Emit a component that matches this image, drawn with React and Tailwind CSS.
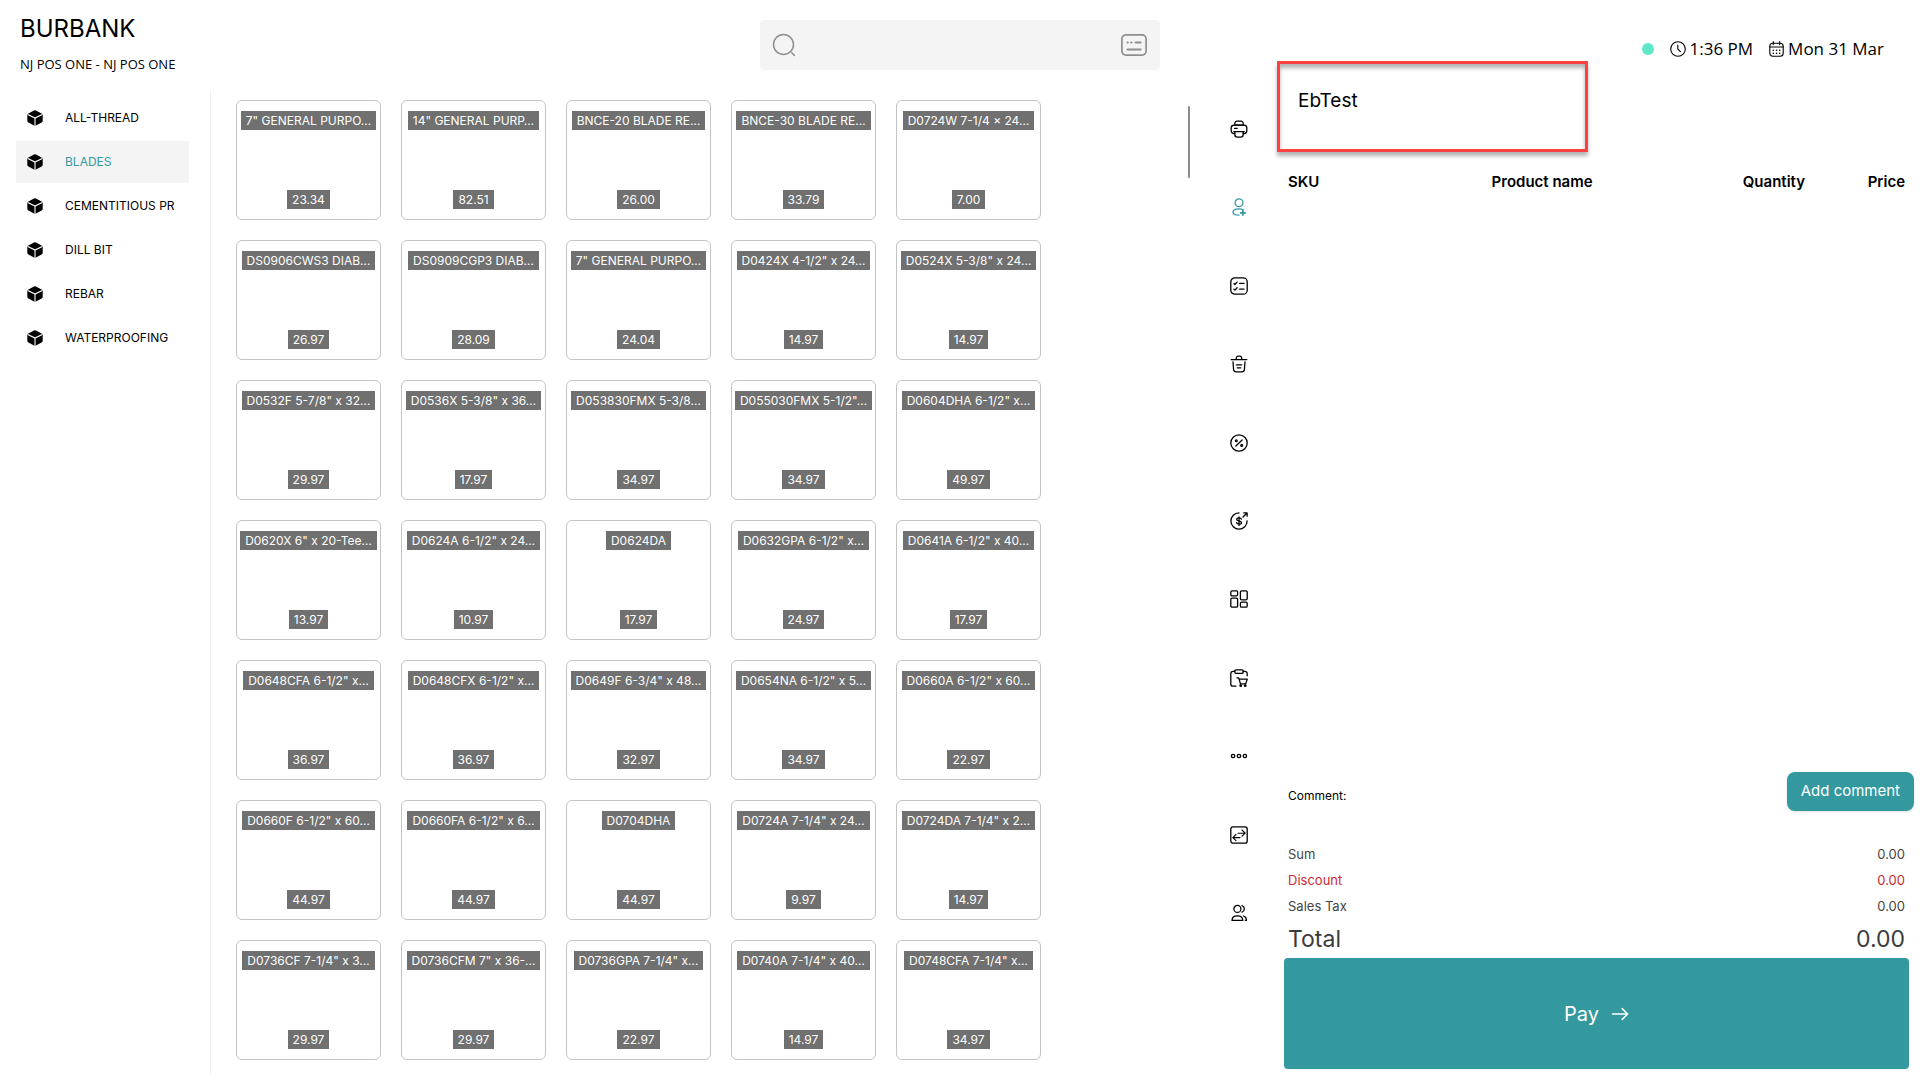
import React, { useState } from 'react';

const CATEGORIES = ['ALL-THREAD', 'BLADES', 'CEMENTITIOUS PR', 'DILL BIT', 'REBAR', 'WATERPROOFING'];

const PRODUCTS = [
    ['7" GENERAL PURPO…', '23.34'],
    ['14" GENERAL PURP…', '82.51'],
    ['BNCE-20 BLADE RE…', '26.00'],
    ['BNCE-30 BLADE RE…', '33.79'],
    ['D0724W 7-1/4 × 24…', '7.00'],
    ['DS0906CWS3 DIAB…', '26.97'],
    ['DS0909CGP3 DIAB…', '28.09'],
    ['7" GENERAL PURPO…', '24.04'],
    ['D0424X 4-1/2" x 24…', '14.97'],
    ['D0524X 5-3/8" x 24…', '14.97'],
    ['D0532F 5-7/8" x 32…', '29.97'],
    ['D0536X 5-3/8" x 36…', '17.97'],
    ['D053830FMX 5-3/8…', '34.97'],
    ['D055030FMX 5-1/2"…', '34.97'],
    ['D0604DHA 6-1/2" x…', '49.97'],
    ['D0620X 6" x 20-Tee…', '13.97'],
    ['D0624A 6-1/2" x 24…', '10.97'],
    ['D0624DA', '17.97'],
    ['D0632GPA 6-1/2" x…', '24.97'],
    ['D0641A 6-1/2" x 40…', '17.97'],
    ['D0648CFA 6-1/2" x…', '36.97'],
    ['D0648CFX 6-1/2" x…', '36.97'],
    ['D0649F 6-3/4" x 48…', '32.97'],
    ['D0654NA 6-1/2" x 5…', '34.97'],
    ['D0660A 6-1/2" x 60…', '22.97'],
    ['D0660F 6-1/2" x 60…', '44.97'],
    ['D0660FA 6-1/2" x 6…', '44.97'],
    ['D0704DHA', '44.97'],
    ['D0724A 7-1/4" x 24…', '9.97'],
    ['D0724DA 7-1/4" x 2…', '14.97'],
    ['D0736CF 7-1/4" x 3…', '29.97'],
    ['D0736CFM 7" x 36-…', '29.97'],
    ['D0736GPA 7-1/4" x…', '22.97'],
    ['D0740A 7-1/4" x 40…', '14.97'],
    ['D0748CFA 7-1/4" x…', '34.97'],
];

const TOOLS = [
    {
        label: 'Print',
        icon: (
            <>
                <path d="M4.8 5.2V3.4A2.2 2.2 0 0 1 7 1.2h4a2.2 2.2 0 0 1 2.2 2.2v1.8z" />
                <path d="M4.8 13.6H4A2.8 2.8 0 0 1 1.2 10.8V8A2.8 2.8 0 0 1 4 5.2h10A2.8 2.8 0 0 1 16.8 8v2.8a2.8 2.8 0 0 1-2.8 2.8h-.8" />
                <path d="M3.8 11.6h10.4M4.8 11.6v2.9a2.6 2.6 0 0 0 2.6 2.6h3.2a2.6 2.6 0 0 0 2.6-2.6v-2.9M4.6 8.4h2.6" />
            </>
        ),
    },
    {
        label: 'Add customer',
        active: true,
        icon: (
            <>
                <circle cx="9" cy="4.8" r="3.900" />
                <path d="M13.400 11.900c-1.200-.7-2.700-1.100-4.400-1.100-3.400 0-6 1.400-6 3.200s2.400 3.200 6 3.200" />
                <path d="M12.900 12.700v4.400M10.700 14.900h4.400" strokeWidth="1.700" />
            </>
        ),
    },
    {
        label: 'Order list',
        icon: (
            <>
                <rect x=".8" y=".8" width="16.4" height="16.4" rx="4" />
                <path d="m3.900 6.600 1 .9 2.200-2.400M9.600 6.400h4.400M3.900 12.200l1 .9 2.200-2.400M9.600 12.100h4.400" />
            </>
        ),
    },
    {
        label: 'Delete',
        icon: (
            <>
                <path d="M1.200 4.600h15.600M6 4.500l.4-1.600A1.700 1.700 0 0 1 8 1.200h2a1.700 1.700 0 0 1 1.600 1.400l.4 1.900" />
                <path d="m3 6.800.6 7.700a2.500 2.500 0 0 0 2.500 2.400h5.800a2.500 2.500 0 0 0 2.500-2.400l.6-7.700M6.300 9.800h5.400M7.200 12.800h3.600" />
            </>
        ),
    },
    {
        label: 'Discount',
        icon: (
            <>
                <circle cx="9" cy="9" r="8.2" />
                <path d="m5.900 12 6.200-6" />
                <circle cx="6.300" cy="6.800" r=".9" />
                <circle cx="11.700" cy="11.400" r=".9" />
            </>
        ),
    },
    {
        label: 'Refund',
        icon: (
            <>
                <path d="M9 .9a8.100 8.100 0 1 0 8.100 8.100M13 5l4-4M13.800.9h3.300v3.300" />
                <path d="M11.400 7.200c-.2-.9-1-1.300-2.300-1.300-1.500 0-2.400.5-2.400 1.500 0 2.200 4.800 1 4.800 3.300 0 1-.9 1.500-2.400 1.500-1.400 0-2.300-.5-2.500-1.500M9 4.800v8.600" />
            </>
        ),
    },
    {
        label: 'Dashboard',
        icon: (
            <>
                <rect x=".8" y=".8" width="6.8" height="5" rx="1.3" />
                <rect x="10.4" y=".8" width="6.8" height="9" rx="1.3" />
                <rect x=".8" y="8.2" width="6.8" height="9" rx="1.3" />
                <rect x="10.4" y="12.2" width="6.8" height="5" rx="1.3" />
            </>
        ),
    },
    {
        label: 'Saved carts',
        icon: (
            <>
                <path d="M4.800 2.400H3A2.200 2.200 0 0 0 .8 4.600v10.300a2.200 2.200 0 0 0 2.200 2.200h3M13.200 2.400H15a2.200 2.200 0 0 1 2.200 2.200v2.200" />
                <rect x="4.8" y=".8" width="8.4" height="3.5" rx="1.2" />
                <path d="M7 8.900h1.700l1.800 6h5.200l1.500-4.700H9.200" />
                <circle cx="10.700" cy="16.600" r=".8" />
                <circle cx="15.200" cy="16.600" r=".8" />
            </>
        ),
    },
    {
        label: 'More',
        icon: (
            <>
                <circle cx="3.1" cy="9" r="1.7" />
                <circle cx="9" cy="9" r="1.7" />
                <circle cx="14.9" cy="9" r="1.7" />
            </>
        ),
    },
    {
        label: 'Exchange',
        icon: (
            <>
                <rect x=".8" y=".8" width="16.4" height="16.4" rx="2.2" />
                <path d="M8 7.200h7M12 4l3.200 3.200L12 10.200M10 11.600H3M6 8.500l-3.200 3.100L6 14.600" strokeWidth="1.1" />
            </>
        ),
    },
    {
        label: 'Staff',
        icon: (
            <>
                <circle cx="7.400" cy="4.900" r="3.500" />
                <path d="M12 1.600a3.500 3.500 0 0 1 0 6.600M2 16.400c0-2.900 2.200-4.600 5.400-4.600s5.400 1.700 5.400 4.600zM13.600 12c1.800.7 2.900 2.200 2.900 4.300h-1.200" />
            </>
        ),
    },
];

const CubeIcon = () => (
    <svg width="16" height="16" viewBox="0 0 16 16" aria-hidden="true">
        <path d="M7 .6a2 2 0 0 1 2 0l5.600 3a1.800 1.800 0 0 1 1.100 1.600v5.600a1.800 1.800 0 0 1-1.100 1.600L9 15.400a2 2 0 0 1-2 0l-5.600-3a1.800 1.800 0 0 1-1.100-1.600V5.200a1.800 1.800 0 0 1 1.100-1.600z" />
        <path d="M.8 4.400 8 8.100l7.200-3.700M8 8.100V16" fill="none" stroke="#fff" strokeWidth="1.1" />
    </svg>
);

const Sidebar = ({ selected, onSelect }) => (
    <nav className="w-[211px] shrink-0 border-r border-[#f0f0f0] pt-[7px] pl-4 pr-[21px] flex flex-col gap-0.5">
        {CATEGORIES.map((name) => (
            <button
                key={name}
                type="button"
                onClick={() => onSelect(name)}
                className={`h-[42px] px-[11px] flex items-center gap-[22px] text-xs ${selected === name ? 'bg-[#f4f4f4] text-[#33999f]' : 'text-black'}`}
            >
                <span className="shrink-0 text-black"><CubeIcon /></span>
                <span className="whitespace-nowrap">{name}</span>
            </button>
        ))}
    </nav>
);

const ProductCard = ({ name, price }) => (
    <button
        type="button"
        className="w-[145px] h-[120px] py-2.5 rounded-md border border-[#c4c4c4] bg-white flex flex-col items-center justify-between text-xs text-white"
    >
        <span className="h-[19px] px-[5px] leading-[19px] whitespace-nowrap bg-[#707070]">{name}</span>
        <span className="h-[19px] px-[5px] leading-[19px] bg-[#707070]">{price}</span>
    </button>
);

const SearchBar = () => (
    <div className="w-[400px] h-[50px] px-3 rounded bg-[#f4f4f4] flex items-center gap-3 text-[#8e8e8e]">
        <svg width="24" height="24" viewBox="0 0 24 24" fill="none" stroke="currentColor" strokeWidth="1.5" strokeLinecap="round" aria-hidden="true">
            <circle cx="11.500" cy="11.500" r="10" />
            <path d="m19.800 19.800 2.600 2.600" />
        </svg>
        <input type="text" aria-label="Search products" className="flex-1 min-w-0 h-full bg-transparent outline-none text-base text-black" />
        <button type="button" aria-label="Keyboard">
            <svg width="28" height="24" viewBox="0 0 28 24" fill="none" stroke="currentColor" strokeWidth="1.7" strokeLinecap="round" aria-hidden="true">
                <rect x="1.900" y="1.900" width="24.200" height="20.200" rx="4" />
                <path d="M7.400 9.500h.4M11.200 9.500h.4M15.600 9.500h5M7.400 16.400h13.200" strokeWidth="2" />
            </svg>
        </button>
    </div>
);

const Toolbar = () => (
    <div className="w-[82px] shrink-0 pt-[30px] pb-[152px] flex flex-col items-center justify-between">
        {TOOLS.map(({ label, icon, active }) => (
            <button key={label} type="button" aria-label={label} className={active ? 'text-[#33999f]' : 'text-black'}>
                <svg width="18" height="18" viewBox="0 0 18 18" fill="none" stroke="currentColor" strokeWidth="1.3" strokeLinecap="round" strokeLinejoin="round" aria-hidden="true">
                    {icon}
                </svg>
            </button>
        ))}
    </div>
);

const StatusBar = () => (
    <div className="h-[61px] pt-9 pr-[25px] flex items-center justify-end font-['Open_Sans','Noto_Sans',sans-serif] text-[17px] leading-6 text-black">
        <span className="w-3 h-3 mr-4 rounded-full bg-[#5ce8c8]" />
        <svg className="mr-1" width="16" height="16" viewBox="0 0 16 16" fill="none" stroke="currentColor" strokeWidth="1.1" strokeLinecap="round" aria-hidden="true">
            <circle cx="8" cy="8" r="7.300" />
            <path d="M7.800 4v4l2.600 2.700" />
        </svg>
        <span className="mr-4">1:36 PM</span>
        <svg className="mr-1" width="15" height="16" viewBox="0 0 15 16" fill="none" stroke="currentColor" strokeWidth="1.1" strokeLinecap="round" aria-hidden="true">
            <rect x=".8" y="2.300" width="13.400" height="13" rx="3" />
            <path d="M4.300.6v3M10.700.6v3M.8 6h13.400" />
            <path d="M4.200 9.200h.1M7.500 9.200h.1M10.700 9.200h.1M4.200 12.200h.1M7.500 12.200h.1M10.700 12.200h.1" strokeWidth="1.5" />
        </svg>
        <span>Mon 31 Mar</span>
    </div>
);

const SummaryRow = ({ label, value, className }) => (
    <div className={`h-[26px] flex items-center justify-between text-[13px] ${className}`}>
        <span>{label}</span>
        <span>{value}</span>
    </div>
);

const OrderPanel = () => (
    <section className="relative w-1/3 shrink-0 pl-1 pr-[11px] pb-[11px] flex flex-col">
        <StatusBar />
        <div className="absolute -left-[3px] top-[61px] w-[311px] h-[91px] border-3 border-[#fb4141] shadow-[0_4px_4px_rgba(0,0,0,0.3),inset_0_4px_4px_rgba(0,0,0,0.3)] pointer-events-none" />
        <div className="h-[91px] pl-3.5 pb-2.5 flex items-center text-[19px] text-black">EbTest</div>
        <div className="flex-1 px-1 pt-[18px]">
            <table className="w-full table-fixed text-[15px] leading-6 text-black">
                <thead>
                    <tr>
                        <th className="w-[33%] text-left font-semibold">SKU</th>
                        <th className="text-left font-semibold">Product name</th>
                        <th className="w-[100px] text-right font-semibold">Quantity</th>
                        <th className="w-[100px] text-right font-semibold">Price</th>
                    </tr>
                </thead>
            </table>
        </div>
        <div className="-mr-[5px] pl-1 flex items-start justify-between">
            <span className="pt-4 text-xs text-black">Comment:</span>
            <button type="button" className="h-[39px] px-3.5 rounded-lg bg-[#33999f] text-[15px] text-white shadow-sm">
                Add comment
            </button>
        </div>
        <div className="pt-[31px] px-1">
            <SummaryRow label="Sum" value="0.00" className="text-[#444]" />
            <SummaryRow label="Discount" value="0.00" className="text-[#d2282f]" />
            <SummaryRow label="Sales Tax" value="0.00" className="text-[#444]" />
            <div className="h-[38px] flex items-center justify-between text-[23px] text-[#3c3c3c]">
                <span>Total</span>
                <span>0.00</span>
            </div>
        </div>
        <button type="button" className="h-[111px] rounded bg-[#33999f] flex items-center justify-center gap-3 text-xl text-white">
            Pay
            <svg width="18" height="14" viewBox="0 0 18 14" fill="none" stroke="currentColor" strokeWidth="1.5" strokeLinecap="round" strokeLinejoin="round" aria-hidden="true">
                <path d="M1.500 7h15M11.200 1.600 16.600 7l-5.400 5.400" />
            </svg>
        </button>
    </section>
);

const App = () => {
    const [selected, setSelected] = useState('BLADES');

    return (
        <div className="min-h-screen flex bg-white font-['Inter','Liberation_Sans',sans-serif]">
            <div className="flex-1 min-w-0 flex flex-col">
                <header className="h-[90px] pl-5 pr-[120px] flex items-start justify-between text-black">
                    <div className="pt-[13px]">
                        <h1 className="text-2xl leading-8">BURBANK</h1>
                        <p className="pt-[11px] font-['Open_Sans','Noto_Sans',sans-serif] text-[13px] leading-4">NJ POS ONE - NJ POS ONE</p>
                    </div>
                    <div className="pt-5">
                        <SearchBar />
                    </div>
                </header>
                <div className="flex-1 flex pb-1.5">
                    <Sidebar selected={selected} onSelect={setSelected} />
                    <main className="flex-1 min-w-0 pt-2.5 pl-[25px] flex items-start justify-between">
                        <div className="grid grid-cols-[repeat(5,145px)] gap-5">
                            {PRODUCTS.map(([name, price], i) => (
                                <ProductCard key={i} name={name} price={price} />
                            ))}
                        </div>
                        <div className="w-0.5 h-[72px] mt-1.5 mr-2 rounded-full bg-[#8c8c8c]" />
                    </main>
                    <Toolbar />
                </div>
            </div>
            <OrderPanel />
        </div>
    );
};

export default App;
